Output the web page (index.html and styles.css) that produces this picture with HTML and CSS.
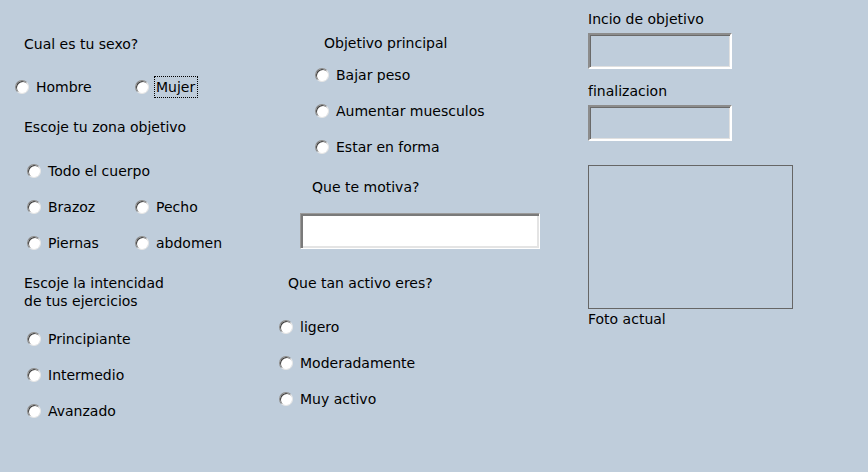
FILE: index.html
```html
<!DOCTYPE html>
<html lang="es">
<head>
<meta charset="utf-8">
<title>Formulario</title>
<link rel="stylesheet" href="styles.css">
</head>
<body>
<div class="form">
  <div class="col col1">
    <div class="lbl t-sexo">Cual es tu sexo?</div>
    <div class="row r-sexo">
      <label class="opt o-hombre"><input type="radio" name="sexo"><span>Hombre</span></label>
      <label class="opt o-mujer"><input type="radio" name="sexo"><span class="focus">Mujer</span></label>
    </div>
    <div class="lbl t-zona">Escoje tu zona objetivo</div>
    <div class="row r-todo">
      <label class="opt o-a"><input type="radio" name="zona"><span>Todo el cuerpo</span></label>
    </div>
    <div class="row r-gap16">
      <label class="opt o-a"><input type="radio" name="zona"><span>Brazoz</span></label>
      <label class="opt o-b"><input type="radio" name="zona"><span>Pecho</span></label>
    </div>
    <div class="row r-gap16">
      <label class="opt o-a"><input type="radio" name="zona"><span>Piernas</span></label>
      <label class="opt o-b"><input type="radio" name="zona"><span>abdomen</span></label>
    </div>
    <div class="lbl2 t-int">Escoje la intencidad<br>de tus ejercicios</div>
    <div class="row r-prin">
      <label class="opt o-a"><input type="radio" name="int"><span>Principiante</span></label>
    </div>
    <div class="row r-gap16">
      <label class="opt o-a"><input type="radio" name="int"><span>Intermedio</span></label>
    </div>
    <div class="row r-gap16">
      <label class="opt o-a"><input type="radio" name="int"><span>Avanzado</span></label>
    </div>
  </div>

  <div class="col col2">
    <div class="lbl t-obj">Objetivo principal</div>
    <div class="row r-bajar">
      <label class="opt o-c"><input type="radio" name="obj"><span>Bajar peso</span></label>
    </div>
    <div class="row r-gap16">
      <label class="opt o-c"><input type="radio" name="obj"><span>Aumentar muesculos</span></label>
    </div>
    <div class="row r-gap16">
      <label class="opt o-c"><input type="radio" name="obj"><span>Estar en forma</span></label>
    </div>
    <div class="lbl t-motiva">Que te motiva?</div>
    <input class="field f-motiva" type="text">
    <div class="lbl t-activo">Que tan activo eres?</div>
    <div class="row r-ligero">
      <label class="opt"><input type="radio" name="act"><span>ligero</span></label>
    </div>
    <div class="row r-gap16">
      <label class="opt"><input type="radio" name="act"><span>Moderadamente</span></label>
    </div>
    <div class="row r-gap16">
      <label class="opt"><input type="radio" name="act"><span>Muy activo</span></label>
    </div>
  </div>

  <div class="col col3">
    <div class="lbl t-inicio">Incio de objetivo</div>
    <input class="field field-off f-small" type="text" readonly>
    <div class="lbl t-fin">finalizacion</div>
    <input class="field field-off f-small" type="text" readonly>
    <div class="photo"></div>
    <div class="lbl t-foto">Foto actual</div>
  </div>
</div>
</body>
</html>
```

FILE: styles.css
```css
html, body {
  margin: 0;
  padding: 0;
}
body {
  background: #bfcddb;
  width: 868px;
  height: 472px;
  overflow: hidden;
  font-family: "DejaVu Sans", Verdana, sans-serif;
  font-size: 14px;
  color: #000;
}
.form {
  display: flex;
  align-items: flex-start;
}
.col {
  display: flex;
  flex-direction: column;
  align-items: flex-start;
}
.col1 { width: 279px; }
.col2 { width: 309px; }
.col3 { flex: 1; }

.lbl {
  height: 20px;
  line-height: 20px;
  white-space: nowrap;
}
.lbl2 {
  line-height: 18px;
  white-space: nowrap;
}
.row {
  display: flex;
  height: 20px;
  align-items: center;
}
.opt {
  display: flex;
  align-items: center;
  height: 20px;
  line-height: 20px;
  white-space: nowrap;
}
.opt input {
  appearance: none;
  -webkit-appearance: none;
  margin: 0 7px 0 0;
  width: 14px;
  height: 14px;
  border-radius: 50%;
  background: #fff;
  border: 1px solid #8a8a8a;
  border-right-color: #e6e6e6;
  border-bottom-color: #e6e6e6;
  box-shadow: inset 1px 1px 0 #3c3c3c;
  flex: none;
}
.focus {
  outline: 1px dotted #000;
  outline-offset: 0;
  padding: 0 2px 0 1px;
  margin-left: -1px;
}

/* column 1 */
.t-sexo { margin: 34px 0 0 24px; }
.r-sexo { margin-top: 23px; }
.o-hombre { margin-left: 15px; width: 120px; }
.t-zona { margin: 20px 0 0 24px; }
.r-todo { margin-top: 24px; }
.o-a { margin-left: 27px; width: 108px; }
.r-gap16 { margin-top: 16px; }
.t-int { margin: 21px 0 0 24px; }
.r-prin { margin-top: 19px; }

/* column 2 */
.t-obj { margin: 33px 0 0 45px; }
.r-bajar { margin-top: 12px; }
.o-c { margin-left: 36px; }
.t-motiva { margin: 20px 0 0 33px; }
.field {
  box-sizing: border-box;
  margin: 0;
  padding: 0;
  height: 36px;
  border: 2px solid;
  border-color: #8c8c8c #ffffff #ffffff #8c8c8c;
  box-shadow: inset 1px 1px 0 #6a6a6a, inset -1px -1px 0 #e0e0e0;
  background: #fff;
  outline: none;
  font: inherit;
}
.field-off {
  background: #bfcddb;
}
.f-motiva {
  margin: 16px 0 0 21px;
  width: 240px;
  border-width: 1px;
  border-color: #9a9a9a #ffffff #ffffff #9a9a9a;
  box-shadow: inset 2px 2px 0 #7a7a7a, inset -2px -2px 0 #e4e4e4;
}
.t-activo { margin: 24px 0 0 9px; }
.r-ligero { margin-top: 24px; }

/* column 3 */
.t-inicio { margin-top: 9px; }
.f-small {
  width: 144px;
  margin-top: 4px;
}
.t-fin { margin-top: 12px; }
.photo {
  margin-top: 24px;
  box-sizing: border-box;
  width: 205px;
  height: 144px;
  border: 1px solid #666;
}
.t-foto { margin-top: 0; }
```
